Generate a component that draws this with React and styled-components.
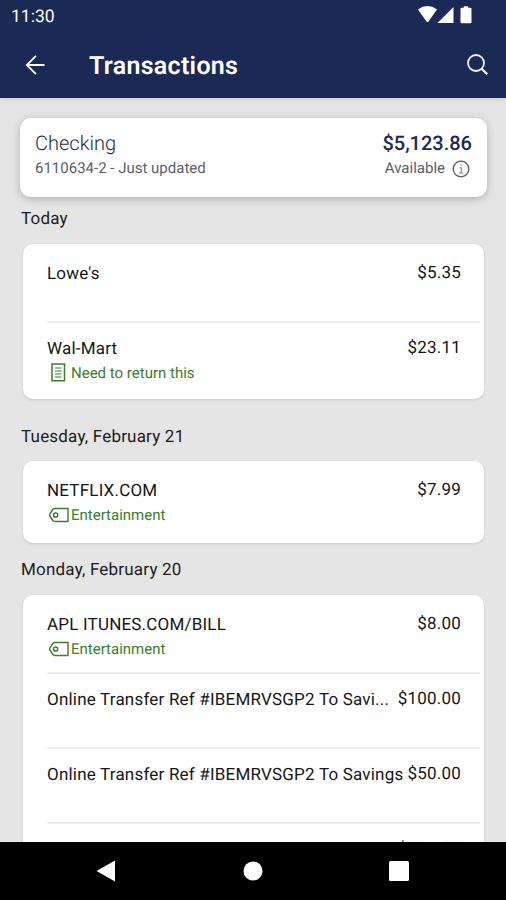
import React from "react";
import styled, { createGlobalStyle, css } from "styled-components";

const navy = "#1b2955";
const green = "#39802c";
const divider = "#eeeeee";

const GlobalStyle = createGlobalStyle`
  * {
    box-sizing: border-box;
  }

  body {
    margin: 0;
    font-family: Roboto, "Liberation Sans", sans-serif;
    text-rendering: geometricPrecision;
  }
`;

const Screen = styled.div`
  display: flex;
  flex-direction: column;
  width: 506px;
  height: 900px;
  overflow: hidden;
  background: #e5e5e5;
`;

const Header = styled.header`
  flex: none;
  height: 98px;
  color: #fff;
  background: ${navy};
  box-shadow: 0 1px 6px rgba(0, 0, 0, 0.12);
`;

const StatusBar = styled.div`
  display: flex;
  justify-content: space-between;
  align-items: center;
  height: 32px;
  padding: 0 32px 0 11px;
`;

const Clock = styled.span`
  margin-top: 2px;
  font-size: 17.5px;
  line-height: 20px;
`;

const Toolbar = styled.div`
  display: flex;
  align-items: center;
  height: 66px;
  padding: 0 17px 0 25px;
`;

const Title = styled.h1`
  flex: 1;
  margin: 4px 0 0 43px;
  font-size: 25px;
  line-height: 30px;
  font-weight: 600;
  letter-spacing: 0.3px;
`;

const Content = styled.main`
  flex: 1;
  min-height: 0;
  overflow: hidden;
  padding: 20px 19px 0 20px;
`;

const AccountCard = styled.section`
  display: flex;
  justify-content: space-between;
  height: 79px;
  padding: 13px 15px 0;
  border-radius: 11px;
  background: #fff;
  box-shadow: 0 2px 8px rgba(0, 0, 0, 0.24);
`;

const AccountColumn = styled.div`
  display: flex;
  flex-direction: column;
  align-items: ${props => (props.$end ? "flex-end" : "flex-start")};
`;

const AccountName = styled.span`
  color: ${navy};
  font-size: 20px;
  line-height: 24px;
  font-weight: 350;
`;

const Balance = styled(AccountName)`
  font-weight: 500;
`;

const AccountDetail = styled.span`
  display: flex;
  align-items: center;
  gap: 7px;
  color: #5b5d6c;
  font-size: 15px;
  line-height: 27px;
  padding-right: ${props => (props.$inset ? 2 : 0)}px;
`;

const DayHeading = styled.h2`
  margin: 0 0 0 1px;
  height: ${props => props.$height}px;
  padding-top: ${props => props.$top}px;
  color: #1c1c1c;
  font-size: 17px;
  line-height: 20px;
  font-weight: 400;
  letter-spacing: 0.2px;
`;

const DayCard = styled.ul`
  list-style: none;
  margin: 0 3px;
  padding: 2px 4px ${props => props.$bottom || 3}px 24px;
  border-radius: 10px;
  background: #fff;
  box-shadow: 0 1px 3px rgba(0, 0, 0, 0.12);
`;

const Row = styled.li`
  height: 75px;
  padding: 17px 19px 0 0;

  & + & {
    border-top: 2px solid ${divider};
    padding-top: 15px;
  }
`;

const RowLine = styled.div`
  display: flex;
  justify-content: space-between;
  align-items: flex-start;
`;

const rowText = css`
  color: #161616;
  font-size: 17px;
  line-height: 22px;
  white-space: nowrap;
`;

const Merchant = styled.span`
  ${rowText};
  max-width: ${props => (props.$clipped ? "344px" : "none")};
  overflow: hidden;
  text-overflow: ellipsis;
  letter-spacing: 0.2px;
`;

const Amount = styled.span`
  ${rowText};
  margin-top: -1px;
  color: ${props => (props.$credit ? "#1f6b35" : "#161616")};
  letter-spacing: 0.2px;
`;

const Note = styled.div`
  display: flex;
  align-items: center;
  height: 22px;
  margin-top: 2px;
  padding-left: 2px;
  color: ${green};
  font-size: 15px;
  line-height: 20px;
`;

const NoteIcon = styled.svg`
  flex: none;
  margin: -1px ${props => props.$gap || 2}px 0 0;
`;

const NavBar = styled.nav`
  flex: none;
  display: flex;
  justify-content: space-between;
  align-items: center;
  height: 58px;
  padding: 0 97px 0 96px;
  background: #000;
`;

const HomeIcon = styled.svg`
  margin-left: 2px;
`;

const StatusIcons = () => (
  <svg width="56" height="20" viewBox="0 0 56 20" fill="#fff">
    <path d="M0 3.5Q9.5-3.3 19 3.5L10.3 15.7Q9.5 16.5 8.7 15.7Z" />
    <path d="M19.5 17 35.5 1V17Z" />
    <path d="M45.8.2h4.4v1.5h2.3q1 0 1 1V16.2q0 1-1 1h-9q-1 0-1-1V2.7q0-1 1-1h2.3Z" />
  </svg>
);

const BackIcon = () => (
  <svg width="21" height="20" viewBox="0 0 21 20" fill="none" stroke="#fff" strokeWidth="1.8">
    <path d="M11 .8 1.8 10l9.2 9.2M1.8 10h17.7" />
  </svg>
);

const SearchIcon = () => (
  <svg width="23" height="23" viewBox="0 0 23 23" fill="none" stroke="#f1f2f7" strokeWidth="1.8">
    <circle cx="10" cy="9" r="8" />
    <path d="m15.6 14.7 5.7 5.7" strokeWidth="2.2" />
  </svg>
);

const InfoIcon = () => (
  <svg width="18" height="18" viewBox="0 0 18 18" fill="none" stroke="#5b5d6c" strokeWidth="1.3">
    <circle cx="9" cy="9" r="7.8" />
    <path d="M7.5 7.7H9.2V13M7.2 13h4M8.3 5h1.5" strokeWidth="1.1" strokeOpacity="0.8" />
  </svg>
);

const ReceiptIcon = () => (
  <NoteIcon $gap={4} width="18" height="19" viewBox="0 0 18 19" fill="none" stroke={green}>
    <path d="M3 1h12.5v16.8H3z" strokeWidth="1.5" />
    <path d="M6 5h6.5M6 8h6.5M6 11h6.5M6 14h6.5" strokeWidth="1.1" />
  </NoteIcon>
);

const TagIcon = () => (
  <NoteIcon width="20" height="16" viewBox="0 0 20 16" fill="none" stroke={green}>
    <path d="M6 1.5h13v13H6Q4.5 14.5 3.5 13L.8 9Q.3 8 .8 7L3.5 3Q4.500 1.500 6 1.500Z" strokeWidth="1.4" />
    <circle cx="6.6" cy="8" r="2.1" strokeWidth="1.5" />
  </NoteIcon>
);

const noteIcons = { memo: ReceiptIcon, category: TagIcon };

const days = [
  {
    label: "Today",
    top: 12,
    height: 47,
    transactions: [
      { name: "Lowe's", amount: "$5.35" },
      { name: "Wal-Mart", amount: "$23.11", note: "Need to return this", kind: "memo" }
    ]
  },
  {
    label: "Tuesday, February 21",
    top: 28,
    height: 62,
    bottom: 5,
    transactions: [
      { name: "NETFLIX.COM", amount: "$7.99", note: "Entertainment", kind: "category" }
    ]
  },
  {
    label: "Monday, February 20",
    top: 17,
    height: 52,
    transactions: [
      { name: "APL ITUNES.COM/BILL", amount: "$8.00", note: "Entertainment", kind: "category" },
      { name: "Online Transfer Ref #IBEMRVSGP2 To Savi...", amount: "$100.00" },
      { name: "Online Transfer Ref #IBEMRVSGP2 To Savings", amount: "$50.00" },
      { name: "", amount: "$225.00", credit: true }
    ]
  }
];

const Transaction = ({ name, amount, note, kind, credit }) => {
  const Icon = noteIcons[kind];

  return (
    <Row>
      <RowLine>
        <Merchant>{name}</Merchant>
        <Amount $credit={credit}>{amount}</Amount>
      </RowLine>
      {note && (
        <Note>
          <Icon />
          {note}
        </Note>
      )}
    </Row>
  );
};

const App = () => (
  <Screen>
    <GlobalStyle />
    <Header>
      <StatusBar>
        <Clock>11:30</Clock>
        <StatusIcons />
      </StatusBar>
      <Toolbar>
        <BackIcon />
        <Title>Transactions</Title>
        <SearchIcon />
      </Toolbar>
    </Header>
    <Content>
      <AccountCard>
        <AccountColumn>
          <AccountName>Checking</AccountName>
          <AccountDetail>6110634-2 - Just updated</AccountDetail>
        </AccountColumn>
        <AccountColumn $end>
          <Balance>$5,123.86</Balance>
          <AccountDetail $inset>
            Available
            <InfoIcon />
          </AccountDetail>
        </AccountColumn>
      </AccountCard>
      {days.map(day => (
        <React.Fragment key={day.label}>
          <DayHeading $top={day.top} $height={day.height}>
            {day.label}
          </DayHeading>
          <DayCard $bottom={day.bottom}>
            {day.transactions.map((transaction, i) => (
              <Transaction key={i} {...transaction} />
            ))}
          </DayCard>
        </React.Fragment>
      ))}
    </Content>
    <NavBar>
      <svg width="19" height="22" viewBox="0 0 19 22" fill="#fff">
        <path d="M.5 11 19 .5v21Z" />
      </svg>
      <HomeIcon width="20" height="20" viewBox="0 0 20 20" fill="#fff">
        <circle cx="10" cy="10" r="9.5" />
      </HomeIcon>
      <svg width="20" height="20" viewBox="0 0 20 20" fill="#fff">
        <rect width="20" height="20" rx="1.5" />
      </svg>
    </NavBar>
  </Screen>
);

export default App;
